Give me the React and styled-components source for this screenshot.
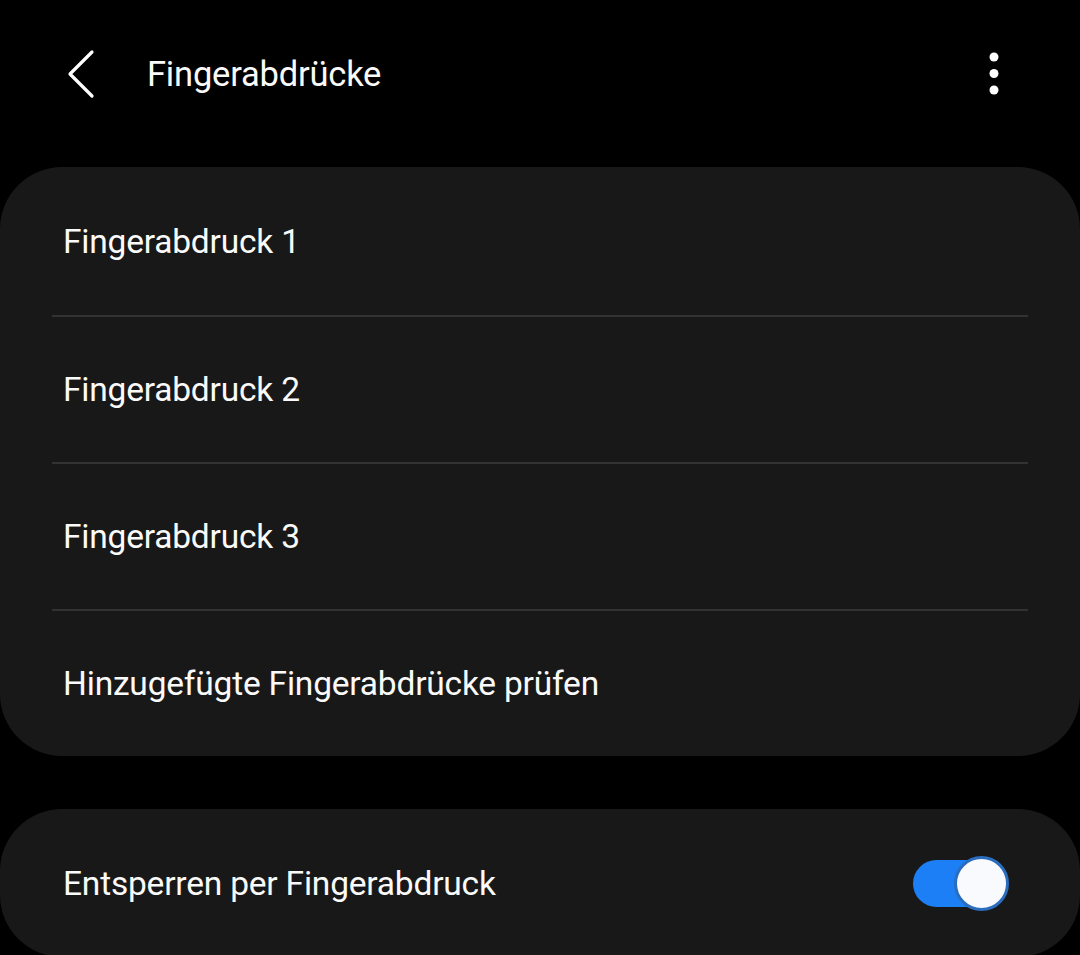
import React, { useState } from "react";
import styled, { createGlobalStyle } from "styled-components";

const GlobalStyle = createGlobalStyle`
  html, body {
    margin: 0;
    padding: 0;
    background: #000;
  }
  body {
    font-family: Roboto, "Noto Sans", sans-serif;
    color: #fafafa;
  }
`;

const Screen = styled.main`
  width: 1080px;
  height: 955px;
  overflow: hidden;
  background: #000;
`;

const Header = styled.header`
  display: flex;
  align-items: center;
  height: 167px;
  padding: 0 79px 20px 66px;
  box-sizing: border-box;
`;

const IconButton = styled.button`
  display: flex;
  align-items: center;
  justify-content: center;
  padding: 0;
  border: 0;
  background: none;
  color: #fff;
  cursor: pointer;
`;

const Title = styled.h1`
  flex: 1;
  margin: 0 0 0 51px;
  font-size: 34.5px;
  font-weight: 400;
  letter-spacing: -0.2px;
  color: #fafafa;
`;

const Card = styled.section`
  background: #181818;
  border-radius: 62px;
  margin-bottom: ${(p) => p.$gap || 0}px;
  overflow: hidden;
`;

const Row = styled.div`
  display: flex;
  align-items: center;
  justify-content: space-between;
  height: ${(p) => p.$h || 145}px;
  padding: 0 79px 0 63px;
  box-sizing: border-box;
  font-size: 33.5px;
  letter-spacing: -0.2px;
  color: #fafafa;
`;

const Divider = styled.div`
  height: 2px;
  margin: 0 52px;
  background: #323232;
`;

const Track = styled.button`
  position: relative;
  width: 88px;
  height: 47px;
  padding: 0;
  border: 0;
  border-radius: 24px;
  background: ${(p) => (p.$on ? "#1c7ff5" : "#555")};
  cursor: pointer;
`;

const Thumb = styled.span`
  position: absolute;
  top: 50%;
  left: ${(p) => (p.$on ? "41px" : "-4px")};
  width: 49px;
  height: 49px;
  margin-top: -27.5px;
  border-radius: 50%;
  background: #f8fafd;
  border: 3px solid ${(p) => (p.$on ? "#2a6cbd" : "#777")};
`;

const Toggle = () => {
  const [on, setOn] = useState(true);
  return (
    <Track $on={on} onClick={() => setOn(!on)} aria-pressed={on}>
      <Thumb $on={on} />
    </Track>
  );
};

const Back = () => (
  <svg width="30" height="50" viewBox="0 0 30 50">
    <path
      d="M26 3 L4 25 L26 47"
      fill="none"
      stroke="currentColor"
      strokeWidth="3.2"
      strokeLinecap="round"
      strokeLinejoin="round"
    />
  </svg>
);

const More = () => (
  <svg width="14" height="44" viewBox="0 0 14 44">
    <circle cx="7" cy="5" r="4.5" fill="currentColor" />
    <circle cx="7" cy="21.5" r="4.5" fill="currentColor" />
    <circle cx="7" cy="38" r="4.5" fill="currentColor" />
  </svg>
);

const fingerprints = ["Fingerabdruck 1", "Fingerabdruck 2", "Fingerabdruck 3"];

export default function App() {
  return (
    <Screen>
      <GlobalStyle />
      <Header>
        <IconButton aria-label="Zurück">
          <Back />
        </IconButton>
        <Title>Fingerabdrücke</Title>
        <IconButton aria-label="Weitere Optionen">
          <More />
        </IconButton>
      </Header>
      <Card $gap={53}>
        {fingerprints.map((name, i) => (
          <React.Fragment key={name}>
            <Row $h={i === 0 ? 148 : 145}>{name}</Row>
            <Divider />
          </React.Fragment>
        ))}
        <Row $h={145}>Hinzugefügte Fingerabdrücke prüfen</Row>
      </Card>
      <Card>
        <Row $h={148}>
          Entsperren per Fingerabdruck
          <Toggle />
        </Row>
      </Card>
    </Screen>
  );
}
